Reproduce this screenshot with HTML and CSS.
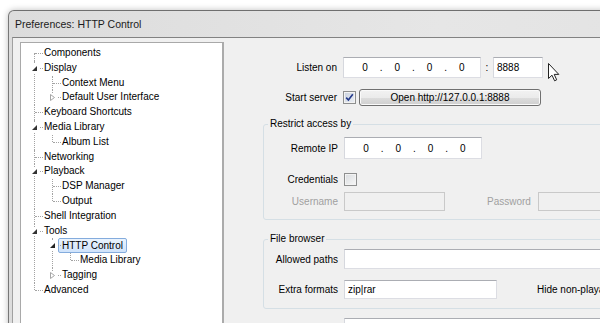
FILE: index.html
```html
<!DOCTYPE html>
<html>
<head>
<meta charset="utf-8">
<title>Preferences: HTTP Control</title>
<link rel="stylesheet" href="styles.css">
</head>
<body>
<div class="window">
  <div class="titlebar"><span class="title">Preferences: HTTP Control</span></div>
  <div class="frame">
    <div class="client">
      <div class="treepanel">
        <ul class="tree">
          <li><span class="row"><span class="lbl">Components</span></span></li>
          <li><span class="row"><i class="exp open"><svg width="9" height="9" viewBox="0 0 9 9"><polygon points="7,2 7,7 2,7" fill="#333"/></svg></i><span class="lbl">Display</span></span>
            <ul>
              <li><span class="row"><span class="lbl">Context Menu</span></span></li>
              <li><span class="row"><i class="exp"><svg width="9" height="9" viewBox="0 0 9 9"><polygon points="2.5,1.5 6.5,4.5 2.5,7.5" fill="#fff" stroke="#a6a6a6"/></svg></i><span class="lbl">Default User Interface</span></span></li>
            </ul>
          </li>
          <li><span class="row"><span class="lbl">Keyboard Shortcuts</span></span></li>
          <li><span class="row"><i class="exp open"><svg width="9" height="9" viewBox="0 0 9 9"><polygon points="7,2 7,7 2,7" fill="#333"/></svg></i><span class="lbl">Media Library</span></span>
            <ul>
              <li><span class="row"><span class="lbl">Album List</span></span></li>
            </ul>
          </li>
          <li><span class="row"><span class="lbl">Networking</span></span></li>
          <li><span class="row"><i class="exp open"><svg width="9" height="9" viewBox="0 0 9 9"><polygon points="7,2 7,7 2,7" fill="#333"/></svg></i><span class="lbl">Playback</span></span>
            <ul>
              <li><span class="row"><span class="lbl">DSP Manager</span></span></li>
              <li><span class="row"><span class="lbl">Output</span></span></li>
            </ul>
          </li>
          <li><span class="row"><span class="lbl">Shell Integration</span></span></li>
          <li><span class="row"><i class="exp open"><svg width="9" height="9" viewBox="0 0 9 9"><polygon points="7,2 7,7 2,7" fill="#333"/></svg></i><span class="lbl">Tools</span></span>
            <ul>
              <li><span class="row"><i class="exp open"><svg width="9" height="9" viewBox="0 0 9 9"><polygon points="7,2 7,7 2,7" fill="#222"/></svg></i><span class="lbl selected">HTTP Control</span></span>
                <ul>
                  <li><span class="row"><span class="lbl">Media Library</span></span></li>
                </ul>
              </li>
              <li><span class="row"><i class="exp"><svg width="9" height="9" viewBox="0 0 9 9"><polygon points="2.5,1.5 6.5,4.5 2.5,7.5" fill="#fff" stroke="#a6a6a6"/></svg></i><span class="lbl">Tagging</span></span></li>
            </ul>
          </li>
          <li><span class="row"><span class="lbl">Advanced</span></span></li>
        </ul>
      </div>

      <div class="pane">
        <div class="form">
          <label class="label">Listen on</label>
          <div class="ctrl">
            <div class="box ip"><span class="oct">0</span><span class="dot">.</span><span class="oct">0</span><span class="dot">.</span><span class="oct">0</span><span class="dot">.</span><span class="oct">0</span></div>
            <span class="colon">:</span>
            <div class="box port">8888</div>
          </div>
          <label class="label">Start server</label>
          <div class="ctrl">
            <span class="cb checked"><svg width="11" height="11" viewBox="0 0 11 11"><path d="M2.2 5.6 L4.4 8 L8.8 2.2" fill="none" stroke="#23398a" stroke-width="1.6"/></svg></span>
            <button class="btn">Open http://127.0.0.1:8888</button>
          </div>
        </div>

        <fieldset class="group restrict">
          <legend>Restrict access by</legend>
          <div class="form inner">
            <label class="label">Remote IP</label>
            <div class="ctrl">
              <div class="box ip tall"><span class="oct">0</span><span class="dot">.</span><span class="oct">0</span><span class="dot">.</span><span class="oct">0</span><span class="dot">.</span><span class="oct">0</span></div>
            </div>
            <label class="label">Credentials</label>
            <div class="ctrl"><span class="cb"></span></div>
            <label class="label disabled">Username</label>
            <div class="ctrl">
              <div class="box off user"></div>
              <label class="disabled pwlabel">Password</label>
              <div class="box off pass"></div>
            </div>
          </div>
        </fieldset>

        <fieldset class="group files">
          <legend>File browser</legend>
          <div class="form inner">
            <label class="label">Allowed paths</label>
            <div class="ctrl"><div class="box paths"></div></div>
            <label class="label">Extra formats</label>
            <div class="ctrl">
              <div class="box formats">zip|rar</div>
              <span class="hide">Hide non-playable files</span>
            </div>
          </div>
        </fieldset>

        <div class="box bottombox"></div>
      </div>
    </div>
  </div>
</div>
<svg class="cursor" width="13" height="20" viewBox="0 0 13 20"><path d="M0.5 0.5 L0.5 15.5 L4 12.2 L6.6 17.8 L8.7 16.8 L6.2 11.4 L10.8 11.4 Z" fill="#fff" stroke="#222" stroke-width="1" stroke-linejoin="round"/></svg>
</body>
</html>
```

FILE: styles.css
```css
html, body {
  margin: 0;
  height: 100%;
  overflow: hidden;
  background: #fff;
}
body {
  font-family: "Liberation Sans", Arial, sans-serif;
  font-size: 10px;
  color: #000;
}

.window {
  margin: 10px 0 0 8px;
  width: 720px;
  height: 400px;
  border-top: 1px solid #6f6f6f;
  border-left: 1px solid #777;
  border-top-left-radius: 6px;
  background: linear-gradient(90deg, #dcdcdc, #e6e6e6 60%, #e2e2e2);
  box-shadow: 0 0 6px rgba(0, 0, 0, 0.25);
}
.titlebar {
  height: 26px;
  padding-left: 6px;
  display: flex;
  align-items: center;
  font-size: 10.5px;
  color: #1b1b1b;
}
.frame {
  padding-left: 3px;
  height: 100%;
}
.client {
  display: flex;
  height: 100%;
  padding: 4px 0 0 7px;
  background: #f0f0f0;
  border-top: 1px solid #828282;
  border-left: 1px solid #a0a0a0;
}

/* tree */
.treepanel {
  flex: none;
  width: 201px;
  height: 320px;
  background: #fff;
  border: 1px solid #a9a9a9;
  border-right: 2px solid #ababab;
}
.tree, .tree ul {
  list-style: none;
  margin: 0;
  padding: 0;
}
.tree {
  padding: 3px 0 0 13px;
}
.tree ul {
  margin-left: 8px;
}
.tree li {
  position: relative;
  padding-left: 10px;
}
.tree li::before {
  content: "";
  position: absolute;
  left: 0;
  top: 0;
  bottom: 0;
  border-left: 1px dotted #a3a3a3;
}
.tree li:last-child::before {
  bottom: auto;
  height: 7px;
}
.tree > li:first-child::before {
  top: 7px;
}
.tree li::after {
  content: "";
  position: absolute;
  left: 1px;
  top: 7px;
  width: 8px;
  border-top: 1px dotted #a3a3a3;
}
.row {
  display: block;
  height: 14.8px;
  line-height: 14.8px;
  white-space: nowrap;
  position: relative;
}
.exp {
  position: absolute;
  left: -14px;
  top: 3px;
  width: 9px;
  height: 9px;
  background: #fff;
  z-index: 1;
  display: block;
}
.exp svg {
  display: block;
}
.lbl {
  display: inline-block;
  height: 14px;
  line-height: 14px;
}
.lbl.selected {
  margin-left: -4px;
  padding: 0 3px;
  border: 1px solid #84acdd;
  border-radius: 2px;
  height: 13px;
  line-height: 13px;
  background: linear-gradient(#eaf3fd, #cfe3fb);
}

/* right pane */
.pane {
  flex: none;
  width: 500px;
  padding: 15px 0 0 39px;
}
.form {
  display: grid;
  grid-template-columns: 74px auto;
  column-gap: 6px;
  row-gap: 11px;
  align-items: center;
}
.label {
  text-align: right;
  white-space: nowrap;
}
.ctrl {
  display: flex;
  align-items: center;
}
.box {
  box-sizing: border-box;
  background: #fff;
  border: 1px solid #dcdde3;
  border-top-color: #abadb3;
  border-left-color: #d6d8de;
}
.ip {
  width: 138px;
  height: 21px;
  display: flex;
  align-items: center;
  padding-left: 15px;
}
.ip.tall {
  height: 22px;
}
.oct {
  width: 12px;
  text-align: center;
}
.dot {
  width: 20.3px;
  text-align: center;
}
.colon {
  width: 12px;
  text-align: center;
}
.port {
  width: 50px;
  height: 21px;
  padding-left: 3px;
  line-height: 19px;
}
.cb {
  box-sizing: border-box;
  width: 13px;
  height: 13px;
  border: 1px solid #8e8f8f;
  background: linear-gradient(135deg, #d9dcdf, #f7f7f7);
  box-shadow: inset 0 0 0 1px #f3f3f3;
  display: flex;
  align-items: center;
  justify-content: center;
}
.cb.checked {
  background: linear-gradient(135deg, #c9d1de, #eceff5);
}
.cb svg {
  display: block;
}
.btn {
  margin-left: 3px;
  width: 182px;
  height: 17px;
  padding: 0;
  font: inherit;
  color: #000;
  border: 1px solid #707070;
  border-radius: 3px;
  background: linear-gradient(#f2f2f2 0%, #ebebeb 50%, #dddddd 51%, #cfcfcf 100%);
  box-shadow: inset 0 0 0 1px #fafafa;
}

.group {
  margin: 12px 0 0 0;
  padding: 0;
  width: 480px;
  border: 1px solid #d5dfe5;
  border-radius: 3px;
  min-inline-size: 0;
}
.group legend {
  margin-left: 4px;
  padding: 0 2px;
  line-height: 12px;
  height: 12px;
}
.restrict .inner {
  padding: 7px 0 8px 0;
  row-gap: 0;
}
.restrict .inner > :nth-child(3),
.restrict .inner > :nth-child(4) {
  margin-top: 14px;
}
.restrict .inner > :nth-child(5),
.restrict .inner > :nth-child(6) {
  margin-top: 6px;
}
.disabled {
  color: #a0a0a0;
}
.off {
  background: #f0f0f0;
  border-color: #c9c9c9;
}
.user {
  width: 101px;
  height: 19px;
}
.pwlabel {
  margin-left: 42px;
}
.pass {
  margin-left: 7px;
  width: 120px;
  height: 19px;
}

.files {
  margin-top: 13px;
}
.files .inner {
  padding: 4px 0 9px 0;
}
.paths {
  width: 300px;
  height: 20px;
}
.formats {
  width: 153px;
  height: 19px;
  line-height: 17px;
  padding-left: 3px;
}
.hide {
  margin-left: 40px;
  white-space: nowrap;
}
.bottombox {
  margin: 9px 0 0 81px;
  width: 300px;
  height: 20px;
}

.cursor {
  position: absolute;
  left: 548px;
  top: 63px;
}
```
